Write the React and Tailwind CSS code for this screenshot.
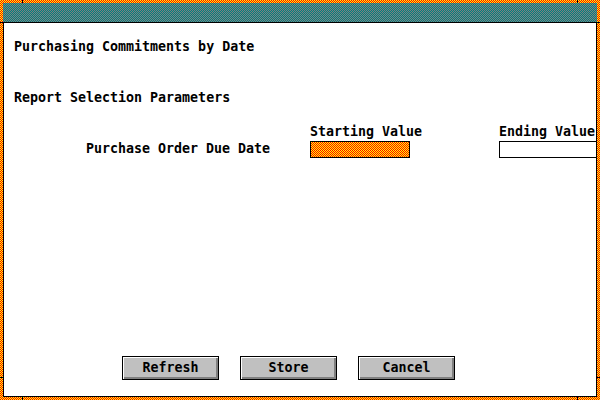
// App.jsx
import { useId } from "react";

const font = { fontFamily: '"DejaVu Sans Mono", "Liberation Mono", monospace' };

// 1px dither texture, sits behind the content of its (relative, isolate) parent
function Checker({ a, b }) {
  const id = useId();
  return (
    <svg className="absolute inset-0 -z-10 w-full h-full" aria-hidden="true" shapeRendering="crispEdges">
      <defs>
        <pattern id={id} width="2" height="2" patternUnits="userSpaceOnUse">
          <rect width="2" height="2" fill={a} />
          <rect width="1" height="1" fill={b} />
          <rect x="1" y="1" width="1" height="1" fill={b} />
        </pattern>
      </defs>
      <rect width="100%" height="100%" fill={`url(#${id})`} />
    </svg>
  );
}

export default function App() {
  return (
    <div
      style={font}
      className="relative isolate w-[600px] h-[400px] p-[3px] flex flex-col text-black text-[13.3px] font-bold leading-4"
    >
      <Checker a="#ff0000" b="#ffff00" />

      {/* resize corner ticks */}
      <span className="absolute left-[22px] top-0 w-px h-[3px] bg-black" />
      <span className="absolute left-[577px] top-0 w-px h-[3px] bg-black" />
      <span className="absolute left-[22px] bottom-0 w-px h-[3px] bg-black" />
      <span className="absolute left-[577px] bottom-0 w-px h-[3px] bg-black" />
      <span className="absolute left-0 top-[22px] w-[3px] h-px bg-black" />
      <span className="absolute right-0 top-[22px] w-[3px] h-px bg-black" />
      <span className="absolute left-0 top-[377px] w-[3px] h-px bg-black" />
      <span className="absolute right-0 top-[377px] w-[3px] h-px bg-black" />

      {/* title bar */}
      <div className="relative isolate h-[20px] shrink-0 border-b border-black">
        <Checker a="#008080" b="#808080" />
      </div>

      {/* client area */}
      <div className="flex-1 flex flex-col bg-white border-x border-b border-black overflow-hidden pl-[10px]">
        <div className="mt-[16px]">Purchasing Commitments by Date</div>
        <div className="mt-[35px]">Report Selection Parameters</div>

        <div className="mt-[18px] flex pl-[296px] whitespace-nowrap">
          <div className="w-[189px] shrink-0">Starting Value</div>
          <div>Ending Value</div>
        </div>

        <div className="flex items-start whitespace-nowrap">
          <div className="w-[296px] shrink-0 pl-[72px] pt-px">Purchase Order Due Date</div>
          <div className="relative isolate overflow-hidden mt-px w-[100px] h-[17px] shrink-0 border border-black">
            <Checker a="#ff0000" b="#ffff00" />
          </div>
          <div className="mt-px ml-[89px] w-[110px] h-[17px] shrink-0 border border-black bg-white" />
        </div>

        <div className="mt-auto mb-[16px] flex gap-[21px] pl-[108px]">
          <Button>Refresh</Button>
          <Button>Store</Button>
          <Button>Cancel</Button>
        </div>
      </div>
    </div>
  );
}

function Button({ children }) {
  return (
    <button className="w-[97px] h-[24px] flex items-center justify-center border border-black bg-[#c0c0c0] shadow-[inset_1px_1px_0_#ffffff,inset_-2px_-2px_0_#808080] font-bold text-[13.3px]">
      {children}
    </button>
  );
}
